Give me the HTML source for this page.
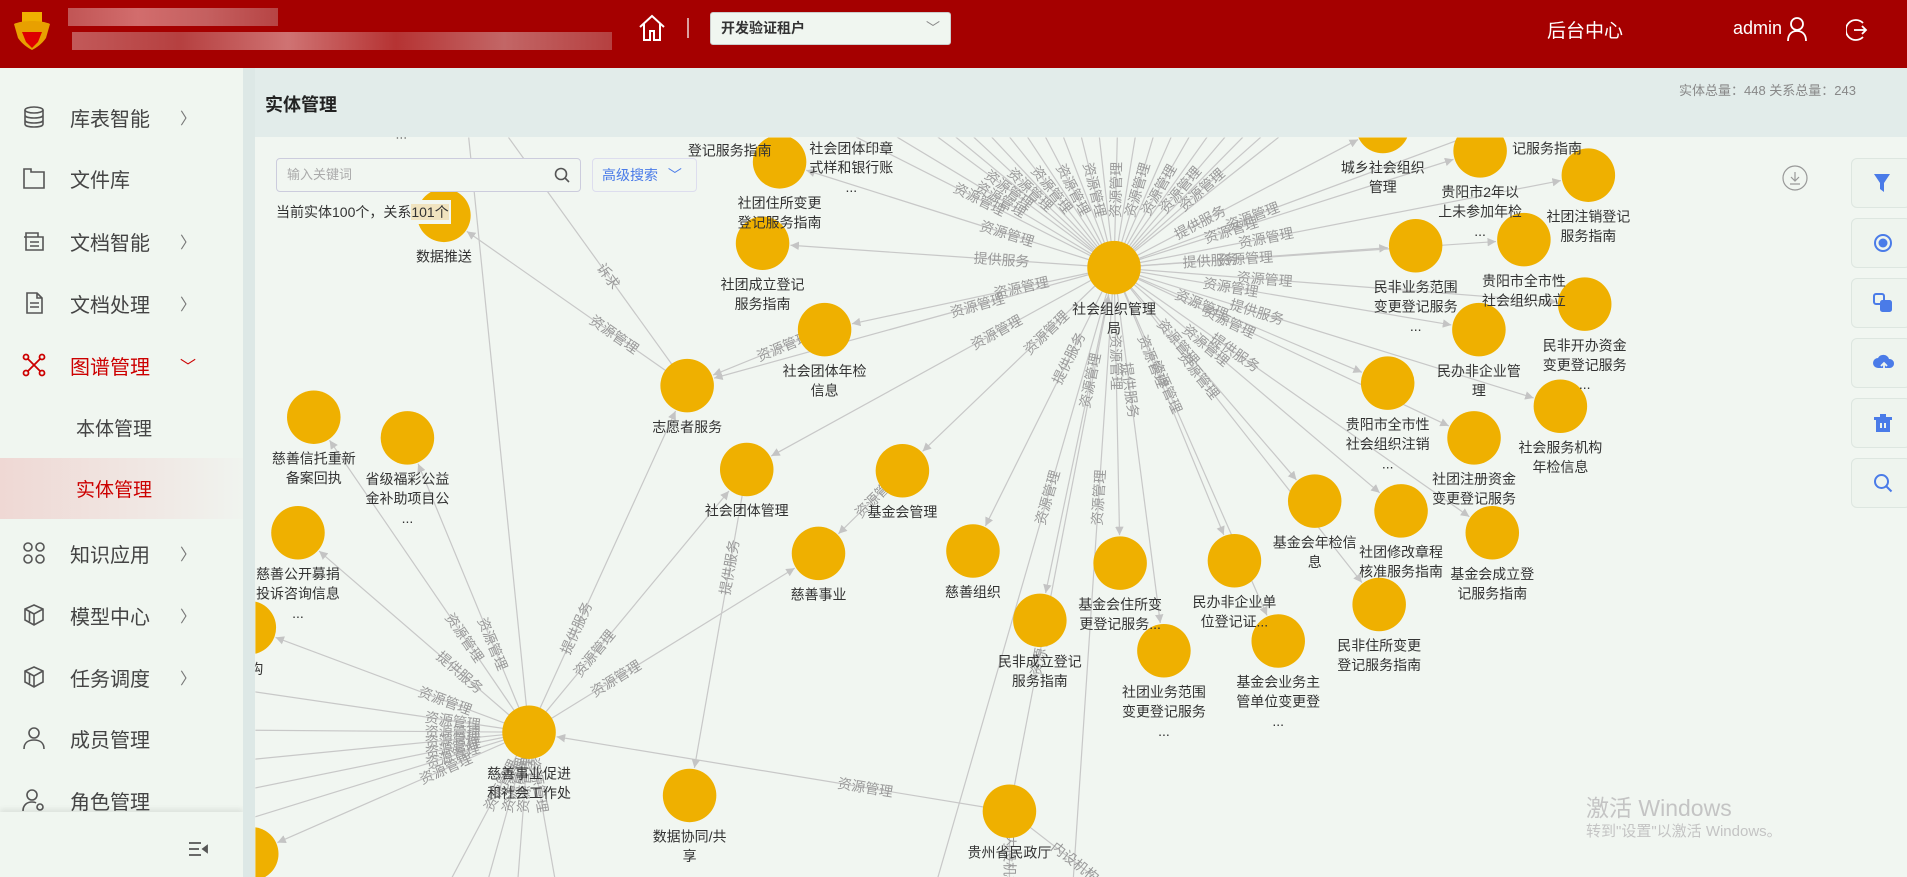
<!DOCTYPE html>
<html style="width:1907px;height:877px;overflow:hidden"><head><meta charset="utf-8">
<style>
*{margin:0;padding:0;box-sizing:border-box}
body{width:1907px;height:877px;overflow:hidden;position:relative;font-family:"Liberation Sans","Noto Sans CJK SC",sans-serif;background:#e2ecea;color:#333}
.hdr{position:absolute;left:0;top:0;width:1907px;height:68px;background:#a50000;color:#fff}
.side{position:absolute;left:0;top:68px;width:243px;height:809px;background:#f0f6f0;overflow:hidden}
.it{position:absolute;left:0;width:243px;height:60px;font-size:20px;color:#444;display:flex;align-items:center}
.it .ic{position:absolute;left:22px;top:18px;width:24px;height:24px}
.it .tx{position:absolute;left:70px}
.it .ar{position:absolute;left:180px;font-size:16px;color:#777}
.abs{position:absolute}
.tb{position:absolute;left:1851px;width:60px;height:50px;background:#eef4ee;border:1px solid #dde6e0;border-radius:6px}
.tb svg{position:absolute;left:21px;top:14px}
</style></head><body>
<div class="hdr">
  <svg class="abs" style="left:8px;top:8px" width="48" height="44" viewBox="0 0 48 44"><path d="M14 4h20v10H14z" fill="#f0b000"/><path d="M6 16c8-4 28-4 36 0l-4 14c-4 6-10 10-14 12-4-2-10-6-14-12z" fill="#e8a000"/><path d="M14 24h20l-4 10-6 6-6-6z" fill="#d00"/></svg>
  <div class="abs" style="left:68px;top:8px;width:210px;height:18px;background:linear-gradient(90deg,#c86a6a,#d88,#c77,#b55);opacity:.8"></div>
  <div class="abs" style="left:72px;top:32px;width:540px;height:18px;background:linear-gradient(90deg,#c77,#b55 20%,#d99 40%,#b44 60%,#c88 80%,#b55);opacity:.75"></div>
  <svg class="abs" style="left:637px;top:13px" width="30" height="30" viewBox="0 0 30 30" fill="none" stroke="#fff" stroke-width="2"><path d="M3 14L15 3l12 11M7 11v16h6v-9h4v9h6V11"/></svg>
  <div class="abs" style="left:687px;top:18px;width:2px;height:20px;background:#d9a0a0"></div>
  <div class="abs" style="left:710px;top:12px;width:241px;height:33px;background:#f0f6f0;border:1px solid #ccc;border-radius:3px;color:#333;font-size:14px;line-height:31px;padding-left:10px;font-weight:bold">开发验证租户<span style="position:absolute;right:10px;top:0;color:#888;font-weight:normal">﹀</span></div>
  <div class="abs" style="left:1547px;top:16px;font-size:19px">后台中心</div>
  <div class="abs" style="left:1733px;top:18px;font-size:18px">admin</div>
  <svg class="abs" style="left:1786px;top:16px" width="22" height="26" viewBox="0 0 22 26" fill="none" stroke="#fff" stroke-width="1.8"><circle cx="11" cy="8" r="6"/><path d="M2 25c0-7 4-10 9-10s9 3 9 10"/></svg>
  <svg class="abs" style="left:1846px;top:18px" width="24" height="24" viewBox="0 0 24 24" fill="none" stroke="#fff" stroke-width="1.8"><path d="M17 5A10 10 0 1 0 17 19"/><path d="M8 12h12M16 8l4 4-4 4"/></svg>
</div>

<div class="side">
  <div class="it" style="top:19px"><svg class="ic" viewBox="0 0 24 24" fill="none" stroke="#555" stroke-width="1.6"><ellipse cx="12" cy="5" rx="9" ry="3"/><path d="M3 5v14c0 2 4 3 9 3s9-1 9-3V5M3 10c0 2 4 3 9 3s9-1 9-3M3 15c0 2 4 3 9 3s9-1 9-3"/></svg><span class="tx">库表智能</span><span class="ar">〉</span></div>
  <div class="it" style="top:80px"><svg class="ic" viewBox="0 0 24 24" fill="none" stroke="#555" stroke-width="1.6"><path d="M2 3h7v3h13v16H2zM9 3v3"/></svg><span class="tx">文件库</span></div>
  <div class="it" style="top:143px"><svg class="ic" viewBox="0 0 24 24" fill="none" stroke="#555" stroke-width="1.6"><path d="M4 4h12v4h5v13H4zM2 8h14M8 13h9M8 17h9"/></svg><span class="tx">文档智能</span><span class="ar">〉</span></div>
  <div class="it" style="top:205px"><svg class="ic" viewBox="0 0 24 24" fill="none" stroke="#555" stroke-width="1.6"><path d="M5 2h10l5 5v15H5zM15 2v5h5M8 12h9M8 16h9"/></svg><span class="tx">文档处理</span><span class="ar">〉</span></div>
  <div class="it" style="top:267px;color:#c00"><svg class="ic" viewBox="0 0 24 24" fill="none" stroke="#c00" stroke-width="1.8"><circle cx="4" cy="4" r="2.5"/><circle cx="20" cy="4" r="2.5"/><circle cx="4" cy="20" r="2.5"/><circle cx="20" cy="20" r="2.5"/><path d="M6 6l12 12M18 6L6 18"/></svg><span class="tx">图谱管理</span><span class="ar" style="color:#c00">﹀</span></div>
  <div class="it" style="top:329px"><span class="tx" style="left:76px;font-size:19px">本体管理</span></div>
  <div class="it" style="top:390px;height:61px;background:linear-gradient(90deg,#efd8d4,#f0eae6 70%,#f0f4ef);color:#c00"><span class="tx" style="left:76px;font-size:19px">实体管理</span></div>
  <div class="it" style="top:455px"><svg class="ic" viewBox="0 0 24 24" fill="none" stroke="#555" stroke-width="1.6"><circle cx="6" cy="6" r="4"/><circle cx="18" cy="6" r="4"/><circle cx="6" cy="18" r="4"/><circle cx="18" cy="18" r="4"/></svg><span class="tx">知识应用</span><span class="ar">〉</span></div>
  <div class="it" style="top:517px"><svg class="ic" viewBox="0 0 24 24" fill="none" stroke="#555" stroke-width="1.6"><path d="M12 2l9 4v11l-9 5-9-5V6zM3 6l9 5 9-5M12 11v11M7.5 8.5v10"/></svg><span class="tx">模型中心</span><span class="ar">〉</span></div>
  <div class="it" style="top:579px"><svg class="ic" viewBox="0 0 24 24" fill="none" stroke="#555" stroke-width="1.6"><path d="M12 2l9 4v11l-9 5-9-5V6zM3 6l9 5 9-5M12 11v11M7.5 8.5v10"/></svg><span class="tx">任务调度</span><span class="ar">〉</span></div>
  <div class="it" style="top:640px"><svg class="ic" viewBox="0 0 24 24" fill="none" stroke="#555" stroke-width="1.6"><circle cx="12" cy="7" r="5"/><path d="M2 23c0-6 4-9 10-9s10 3 10 9"/></svg><span class="tx">成员管理</span></div>
  <div class="it" style="top:702px"><svg class="ic" viewBox="0 0 24 24" fill="none" stroke="#555" stroke-width="1.6"><circle cx="10" cy="7" r="5"/><path d="M1 23c0-6 4-9 9-9 2 0 3 0 4 1"/><circle cx="18" cy="19" r="3"/></svg><span class="tx">角色管理</span></div>
  <div class="abs" style="left:0;top:744px;width:243px;height:65px;background:#f0f6f0;box-shadow:0 -3px 5px rgba(0,0,0,.08)"></div>
  <svg class="abs" style="left:188px;top:773px" width="20" height="16" viewBox="0 0 20 16" fill="none" stroke="#555" stroke-width="1.8"><path d="M1 2h12M1 8h10M1 14h12"/><path d="M19 5l-4 3 4 3z" fill="#555"/></svg>
</div>
<div class="abs" style="left:243px;top:68px;width:12px;height:809px;background:#dde8e6"></div>

<div class="abs" style="left:265px;top:91px;font-size:18px;font-weight:bold;color:#222">实体管理</div>
<div class="abs" style="left:1679px;top:80px;font-size:13px;color:#888">实体总量：448 关系总量：243</div>

<div class="abs" style="left:255px;top:137px;width:1652px;height:740px;background:#f1f6f1"></div>
<svg id="g" class="abs" style="left:0;top:0;overflow:hidden" width="1907" height="877" viewBox="0 0 1568 721">
<defs><clipPath id="cp"><rect x="210" y="113" width="1358" height="608"/></clipPath>
<marker id="ar" viewBox="0 0 10 10" refX="10" refY="5" markerWidth="7" markerHeight="7" orient="auto"><path d="M0 0L10 5 0 10z" fill="#c4c4c4"/></marker></defs>
<g clip-path="url(#cp)" id="gg"><g id="ed"></g><g id="el" font-size="11.5" fill="#9a9a9a"></g><g id="nd"></g><g id="nl" font-size="11.5" fill="#333" text-anchor="middle"></g></g>
</svg>

<div class="abs" style="left:276px;top:158px;width:305px;height:34px;background:#f1f6f1;border:1px solid #ccd;border-radius:4px;font-size:13px;color:#aaa;line-height:32px;padding-left:10px">输入关键词
<svg class="abs" style="right:10px;top:8px" width="16" height="16" viewBox="0 0 16 16" fill="none" stroke="#555" stroke-width="1.6"><circle cx="7" cy="7" r="5.5"/><path d="M11 11l4 4"/></svg></div>
<div class="abs" style="left:592px;top:158px;width:105px;height:34px;background:#f1f6f1;border:1px solid #dde;border-radius:4px;font-size:14px;color:#4a7be8;line-height:32px;padding-left:9px">高级搜索 <span style="margin-left:6px">﹀</span></div>
<div class="abs" style="left:274px;top:200px;height:24px;padding:0 2px;background:#f1f6f1;font-size:14px;line-height:24px;color:#333">当前实体100个，关系<span style="background:rgba(240,220,170,.7)">101个</span></div>
<svg class="abs" style="left:1781px;top:164px" width="28" height="28" viewBox="0 0 28 28" fill="none" stroke="#999" stroke-width="1.2"><circle cx="14" cy="14" r="12"/><path d="M14 8v9M10 13l4 4 4-4M9 20h10"/></svg>

<div class="tb" style="top:158px"><svg width="18" height="20" viewBox="0 0 18 20"><path d="M1 1h16l-6 9v9l-4-3v-6z" fill="#4a7be8"/></svg></div>
<div class="tb" style="top:218px"><svg width="20" height="20" viewBox="0 0 20 20"><circle cx="10" cy="10" r="8" fill="none" stroke="#4a7be8" stroke-width="2"/><circle cx="10" cy="10" r="4.5" fill="#4a7be8"/></svg></div>
<div class="tb" style="top:278px"><svg width="20" height="20" viewBox="0 0 20 20"><rect x="1" y="1" width="10" height="10" rx="2" fill="none" stroke="#4a7be8" stroke-width="2"/><rect x="7" y="7" width="12" height="12" rx="2.5" fill="#4a7be8"/></svg></div>
<div class="tb" style="top:338px"><svg width="22" height="20" viewBox="0 0 22 20"><path d="M5 15a5 5 0 0 1 0-10 6 6 0 0 1 11 1 4.5 4.5 0 0 1 1 9z" fill="#4a7be8"/><path d="M11 19v-9M8 13l3-3 3 3" stroke="#eef4ee" stroke-width="1.8" fill="none"/></svg></div>
<div class="tb" style="top:398px"><svg width="20" height="20" viewBox="0 0 20 20"><path d="M7 1h6v3H7zM1 4h18v3H1zM3 7h14v12H3z" fill="#4a7be8"/><path d="M8 10v5M12 10v5" stroke="#eef4ee" stroke-width="2"/></svg></div>
<div class="tb" style="top:458px"><svg width="20" height="20" viewBox="0 0 20 20" fill="none" stroke="#4a7be8" stroke-width="2"><circle cx="8.5" cy="8.5" r="6.5"/><path d="M13.5 13.5l5 5"/></svg></div>

<div class="abs" style="left:1586px;top:789px;font-size:23px;color:#c4c4c4">激活 Windows</div>
<div class="abs" style="left:1586px;top:820px;font-size:15px;color:#c4c4c4">转到"设置"以激活 Windows。</div>

<script>
var N={
H:[916,220,"社会组织管理|局"],C:[435,602,"慈善事业促进|和社会工作处"],G:[830,667,"贵州省民政厅"],
a1:[641,133,"社团住所变更|登记服务指南"],a2:[627,200,"社团成立登记|服务指南"],a3:[365,177,"数据推送"],
a4:[678,271,"社会团体年检|信息"],a5:[565,317,"志愿者服务"],a6:[614,386,"社会团体管理"],a7:[742,387,"基金会管理"],
a8:[673,455,"慈善事业"],a9:[800,453,"慈善组织"],b1:[258,343,"慈善信托重新|备案回执"],b2:[335,360,"省级福彩公益|金补助项目公|..."],
b3:[245,438,"慈善公开募捐|投诉咨询信息|..."],b4:[567,654,"数据协同/共|享"],c1:[855,510,"民非成立登记|服务指南"],
c2:[921,463,"基金会住所变|更登记服务..."],c3:[957,535,"社团业务范围|变更登记服务|..."],c4:[1015,461,"民办非企业单|位登记证..."],
c5:[1051,527,"基金会业务主|管单位变更登|..."],c6:[1081,412,"基金会年检信|息"],c7:[1152,420,"社团修改章程|核准服务指南"],
c8:[1227,438,"基金会成立登|记服务指南"],c9:[1134,497,"民非住所变更|登记服务指南"],d1:[1212,360,"社团注册资金|变更登记服务"],
d2:[1283,334,"社会服务机构|年检信息"],d3:[1141,315,"贵阳市全市性|社会组织注销|..."],d4:[1216,271,"民办非企业管|理"],
d5:[1303,250,"民非开办资金|变更登记服务|..."],d6:[1164,202,"民非业务范围|变更登记服务|..."],d7:[1253,197,"贵阳市全市性|社会组织成立"],
d8:[1306,144,"社团注销登记|服务指南"],d9:[1217,124,"贵阳市2年以|上未参加年检|..."],e1:[1137,104,"城乡社会组织|管理"],
e2:[1272,88,"记服务指南"],e3:[600,90,"登记服务指南"],e4:[700,88,"社会团体印章|式样和银行账|..."],
f1:[205,516,"机构"],f2:[207,702,""],f3:[330,76,"..."]};
var E=[],L=["资源管理","提供服务","资源管理","资源管理"];
"d1 d2 d3 d4 d5 d6 d7 d8 d9 e1 e2 c6 c7 c8 c9 c1 c2 c3 c4 c5 a1 a2 a4 a6 a7 a9 a5".split(" ").forEach(function(k){E.push(["H",k])});
"b1 b2 b3 f1 a6 a8 a5 f2".split(" ").forEach(function(k){E.push(["C",k])});
E.push(["G","C"],["G","H"],["a6","b4"],["a5","a3"],["a7","a8"],["a4","a5"]);
var ed=document.getElementById("ed"),el=document.getElementById("el"),nd=document.getElementById("nd"),nl=document.getElementById("nl"),S="http://www.w3.org/2000/svg";
function mk(t,a,p){var e=document.createElementNS(S,t);for(var k in a)e.setAttribute(k,a[k]);p.appendChild(e);return e}
function line(x1,y1,x2,y2,arrow,lab,t){var dx=x2-x1,dy=y2-y1,d=Math.hypot(dx,dy),r=arrow?23:0;
mk("line",{x1:x1,y1:y1,x2:x2-dx/d*r,y2:y2-dy/d*r,stroke:"#c8c8c8","stroke-width":1,"marker-end":arrow?"url(#ar)":""},ed);
if(lab){var mx=x1+dx*t,my=y1+dy*t,ang=Math.atan2(dy,dx)*180/Math.PI;if(ang>90)ang-=180;if(ang<-90)ang+=180;
var tx=mk("text",{x:mx,y:my+4,"text-anchor":"middle",transform:"rotate("+ang+" "+mx+" "+my+")"},el);tx.textContent=lab;}}
E.forEach(function(e,i){var a=N[e[0]],b=N[e[1]];line(a[0],a[1],b[0],b[1],1,L[i%4],e[0]=="H"?0.32:0.3)});
var H=N.H,C=N.C,G=N.G;
for(var x=700;x<=1130;x+=22)line(H[0],H[1],x,60,0,(x/22|0)%2?"资源管理":"",0.4);
[[600,60],[650,60],[760,760],[880,760]].forEach(function(p){line(H[0],H[1],p[0],p[1],0,"资源管理",0.35)});
[[150,560],[150,600],[150,630],[150,660],[150,690],[330,800],[380,800],[420,800],[470,800],[380,60]].forEach(function(p,i){line(C[0],C[1],p[0],p[1],0,i<9?"资源管理":"",0.22)});
[[950,760],[830,760]].forEach(function(p){line(G[0],G[1],p[0],p[1],0,"内设机构",0.45)});
line(565,317,380,60,0,"诉求",0.35);
for(var k in N){var n=N[k];mk("circle",{cx:n[0],cy:n[1],r:22,fill:"#efb000"},nd);
var ls=n[2].split("|");ls.forEach(function(s,j){var t=mk("text",{x:n[0],y:n[1]+38+j*16},nl);t.textContent=s});}
</script>
</body></html>
